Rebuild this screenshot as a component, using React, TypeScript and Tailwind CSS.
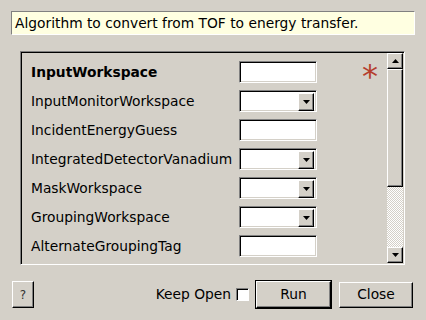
import React from 'react';

const rows = [
  { name: 'InputWorkspace', kind: 'text', bold: true, required: true },
  { name: 'InputMonitorWorkspace', kind: 'combo' },
  { name: 'IncidentEnergyGuess', kind: 'text' },
  { name: 'IntegratedDetectorVanadium', kind: 'combo' },
  { name: 'MaskWorkspace', kind: 'combo' },
  { name: 'GroupingWorkspace', kind: 'combo' },
  { name: 'AlternateGroupingTag', kind: 'text' },
];

const raised =
  'border border-t-white border-l-white border-b-black border-r-black bg-[#d4d0c8] shadow-[inset_-1px_-1px_0_#808080]';
const sunken =
  'border border-t-[#808080] border-l-[#808080] border-b-white border-r-white bg-white shadow-[inset_1px_1px_0_#000,inset_-1px_-1px_0_#d4d0c8]';

function Arrow({ up }: { up?: boolean }) {
  return (
    <svg width="7" height="4" viewBox="0 0 7 4">
      <polygon points={up ? '0,4 7,4 3.5,0' : '0,0 7,0 3.5,4'} fill="#000" />
    </svg>
  );
}

function Field({ kind }: { kind: string }) {
  return (
    <div className={`flex h-[22px] w-[78px] shrink-0 justify-end p-[2px] ${sunken}`}>
      {kind === 'combo' && (
        <div className={`flex h-[18px] w-[16px] items-center justify-center ${raised}`}>
          <Arrow />
        </div>
      )}
    </div>
  );
}

export default function App() {
  return (
    <div className="h-[320px] w-[426px] overflow-hidden bg-[#d4d0c8] font-['DejaVu_Sans',sans-serif] text-[13.8px] text-black">
      <div className="ml-[11px] mt-[11px] flex h-[24px] w-[404px] items-center border border-t-[#808080] border-l-[#808080] border-b-white border-r-white bg-[#ffffe1] pl-[3px]">
        Algorithm to convert from TOF to energy transfer.
      </div>

      <div className="ml-[20px] mt-[16px] flex h-[214px] w-[385px] border border-t-[#808080] border-l-[#808080] border-b-white border-r-white shadow-[inset_1px_1px_0_#000]">
        <div className="flex flex-1 flex-col gap-[7px] overflow-hidden pl-[10px] pt-[9px]">
          {rows.map((r) => (
            <div key={r.name} className="flex h-[22px] shrink-0 items-center">
              <div className={`w-[208px] shrink-0 whitespace-nowrap pt-[1px] ${r.bold ? 'font-bold' : ''}`}>
                {r.name}
              </div>
              <Field kind={r.kind} />
              {r.required && (
                <div className="ml-[45px] h-[22px] self-start">
                  <span className="text-[32px] leading-[30px] text-[#b53e2e]">*</span>
                </div>
              )}
            </div>
          ))}
        </div>
        <div className="mr-[1px] mt-[1px] flex w-[16px] flex-col">
          <div className={`flex h-[16px] items-center justify-center ${raised}`}>
            <Arrow up />
          </div>
          <div className={`h-[118px] ${raised}`} />
          <div className="h-[60px] bg-[repeating-conic-gradient(#ffffff_0_25%,#d4d0c8_0_50%)] bg-[length:2px_2px]" />
          <div className={`flex h-[16px] items-center justify-center ${raised}`}>
            <Arrow />
          </div>
        </div>
      </div>

      <div className="mt-[15px] flex items-center pl-[12px]">
        <button className={`h-[27px] w-[22px] text-[12px] text-[#333] ${raised}`}>?</button>
        <div className="ml-auto flex items-center">
          <span>Keep Open</span>
          <div className="ml-[5px] h-[13px] w-[13px] border border-t-[#808080] border-l-[#808080] border-b-white border-r-white bg-white shadow-[inset_1px_1px_0_#000]" />
        </div>
        <div className="ml-[6px] border border-black">
          <button className={`h-[27px] w-[75px] ${raised}`}>Run</button>
        </div>
        <button className={`ml-[7px] mr-[13px] h-[26px] w-[74px] ${raised}`}>Close</button>
      </div>
    </div>
  );
}
